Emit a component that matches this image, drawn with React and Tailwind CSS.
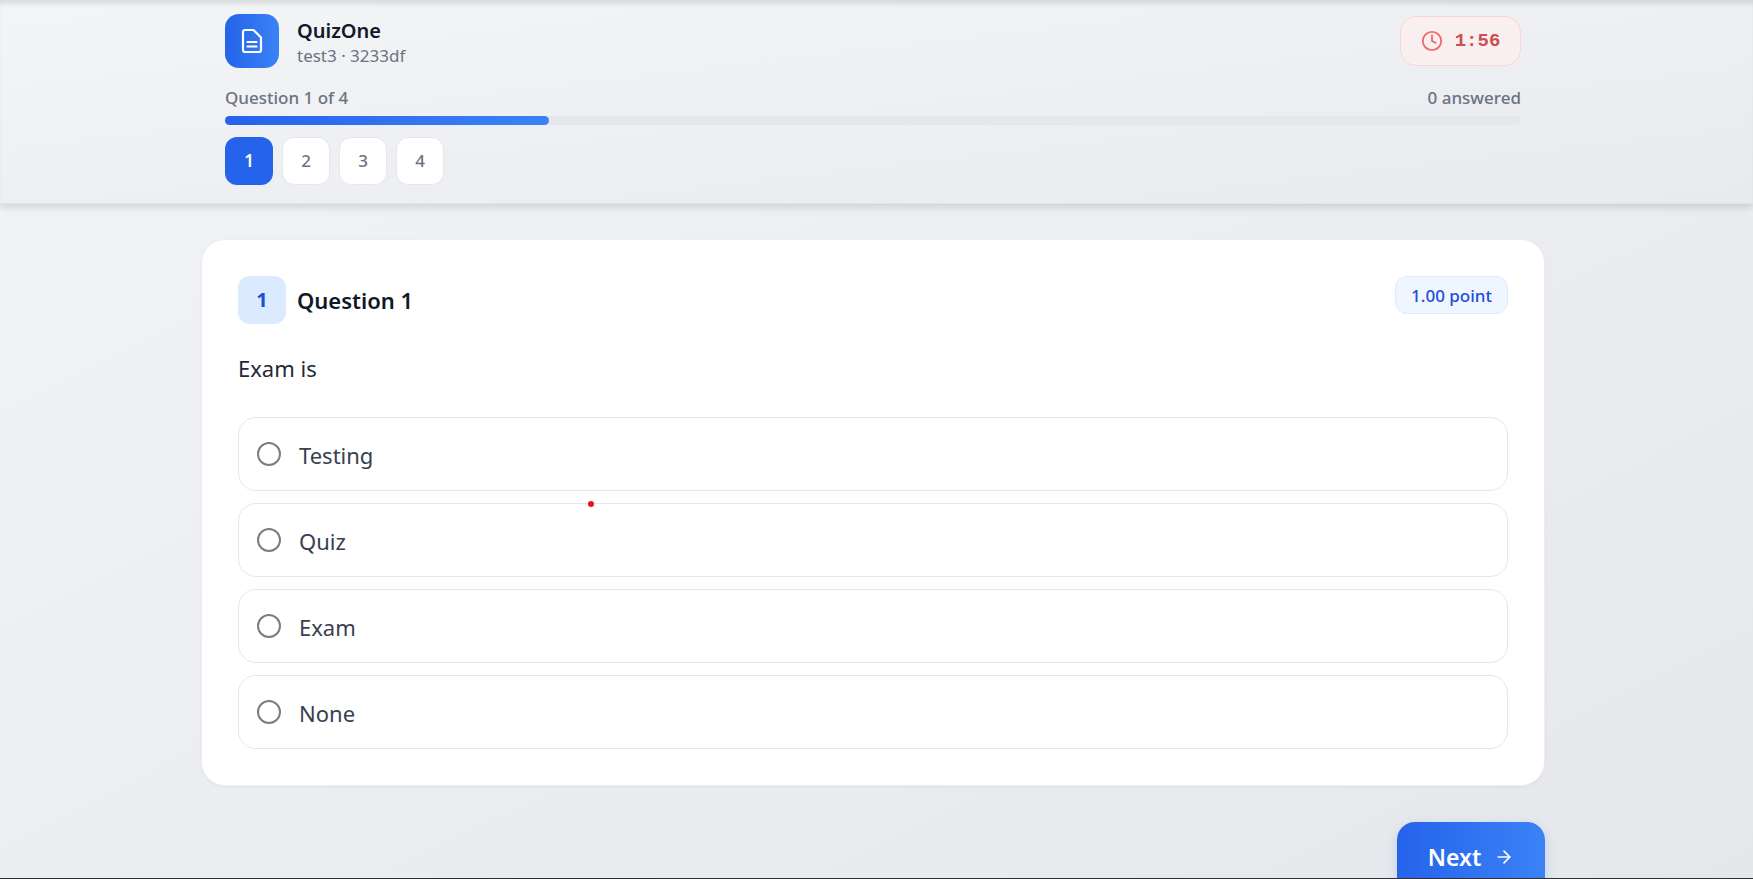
import { ArrowRight, Clock } from "lucide-react";

const options = ["Testing", "Quiz", "Exam", "None"];
const font = "font-['Noto_Sans','Open_Sans',sans-serif]";

function Header() {
  return (
    <header className="h-[204px] border-b border-[#e3e4e9] bg-gradient-to-br from-[#f4f5f7] to-[#e9eaee] pl-[225px] pr-[232px] pt-[14px] shadow-[0_3px_8px_rgba(0,0,0,0.14),inset_0_6px_6px_-3px_rgba(0,0,0,0.13)]">
      <div className="flex h-[54px] items-center justify-between">
        <div className="flex items-center gap-[18px]">
          <div className="flex h-[54px] w-[54px] items-center justify-center rounded-[14px] bg-gradient-to-r from-[#2563eb] to-[#3b82f6]">
            <svg width="22" height="26" viewBox="0 0 22 26" fill="none" stroke="white" strokeWidth="2.2" strokeLinejoin="round" strokeLinecap="round">
              <path d="M4 2h8.500L20 9.500V22a2 2 0 0 1-2 2H4a2 2 0 0 1-2-2V4a2 2 0 0 1 2-2z" />
              <path d="M6.500 14h9M6.500 18.500h9" />
            </svg>
          </div>
          <div className="pt-[3px]">
            <div className="text-[20px] leading-[26px] font-semibold text-[#111827]">QuizOne</div>
            <div className="text-[17px] leading-[24px] text-[#6b7280]">test3 · 3233df</div>
          </div>
        </div>
        <div className="flex h-[50px] w-[121px] items-center justify-center gap-[12px] rounded-[16px] border border-[#fbd5d5] bg-[#f9eff0]">
          <Clock size={22} strokeWidth={2} className="text-[#ef6b6b]" />
          <span className="font-['Liberation_Mono',monospace] text-[19px] font-bold text-[#cc5052]">1:56</span>
        </div>
      </div>
      <div className="mt-[19px] flex h-[22px] items-center justify-between text-[17px] font-medium text-[#6b7280]">
        <span>Question 1 of 4</span>
        <span>0 answered</span>
      </div>
      <div className="mt-[7px] h-[9px] rounded-full bg-[#e5e7eb]">
        <div className="h-full w-1/4 rounded-full bg-gradient-to-r from-[#2563eb] to-[#3b82f6]" />
      </div>
      <div className="mt-[12px] flex gap-[9px]">
        {[1, 2, 3, 4].map((n) => (
          <button
            key={n}
            className={`h-[48px] w-[48px] rounded-[12px] text-[17px] font-medium ${
              n === 1 ? "bg-[#2563eb] font-semibold text-white" : "border border-[#e5e7eb] bg-white text-[#6b7280]"
            }`}
          >
            {n}
          </button>
        ))}
      </div>
    </header>
  );
}

function QuestionCard() {
  return (
    <section className="rounded-[24px] border border-[#eceef1] bg-white p-[36px] shadow-[0_1px_3px_rgba(0,0,0,0.05)]">
      <div className="flex items-start justify-between">
        <div className="flex items-center gap-[11px]">
          <div className="flex h-[48px] w-[48px] items-center justify-center rounded-[12px] bg-[#dbeafe] text-[20px] font-bold text-[#1d4ed8]">1</div>
          <h2 className="pt-[1px] text-[22px] font-semibold text-[#111827]">Question 1</h2>
        </div>
        <span className="flex h-[38px] items-center rounded-[12px] border border-[#dbeafe] bg-[#eff6ff] px-[15px] pt-[1px] text-[17px] font-medium text-[#1d4ed8]">1.00 point</span>
      </div>
      <p className="mt-[28px] text-[22px] leading-[32px] text-[#1f2937]">Exam is</p>
      <div className="mt-[33px] flex flex-col gap-[12px]">
        {options.map((o) => (
          <label key={o} className="flex h-[74px] items-center gap-[18px] rounded-[18px] border border-[#e5e7eb] bg-white pl-[18px]">
            <span className="h-[24px] w-[24px] rounded-full border-2 border-[#7d7d7d]" />
            <span className="pt-[2px] text-[22px] text-[#374151]">{o}</span>
          </label>
        ))}
      </div>
    </section>
  );
}

export default function App() {
  return (
    <div className={`relative h-[879px] overflow-hidden bg-gradient-to-br from-[#f3f4f6] to-[#e5e7eb] ${font}`}>
      <Header />
      <main className="ml-[201px] w-[1344px] pt-[35px]">
        <QuestionCard />
        <div className="mt-[36px] flex justify-end">
          <button className="flex h-[72px] w-[148px] items-center justify-center gap-[13px] rounded-[18px] bg-gradient-to-r from-[#2563eb] to-[#3b82f6] pb-[2px] text-[23px] font-semibold text-white shadow-[0_4px_12px_rgba(37,99,235,0.2)]">
            Next
            <ArrowRight size={20} />
          </button>
        </div>
      </main>
      <span className="absolute left-[588px] top-[501px] h-[6px] w-[6px] rounded-full bg-[#e8141c]" />
      <div className="absolute inset-x-0 bottom-0 h-px bg-[#2e3036]" />
    </div>
  );
}
